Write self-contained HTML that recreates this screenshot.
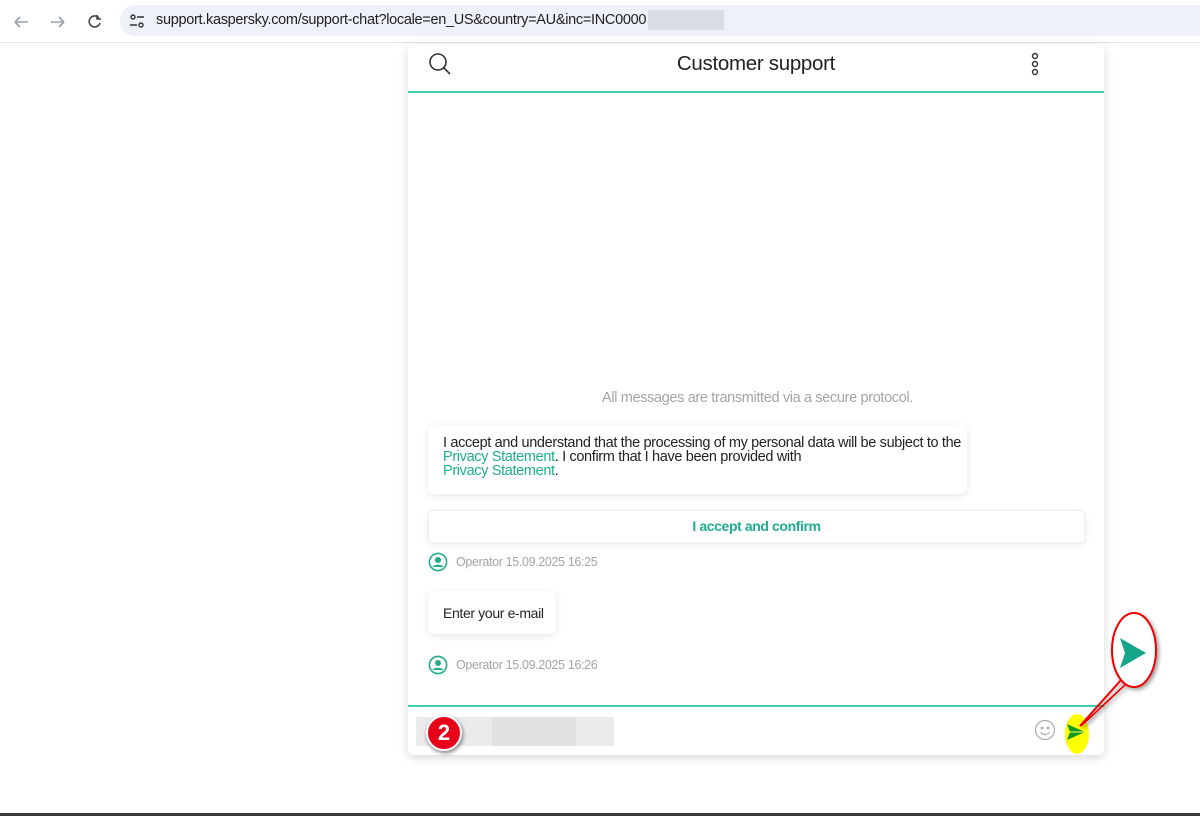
<!DOCTYPE html>
<html><head><meta charset="utf-8"><style>
*{margin:0;padding:0;box-sizing:border-box}
body{width:1200px;height:816px;background:#fff;position:relative;overflow:hidden;font-family:"Liberation Sans",sans-serif;}
.top{position:absolute;left:0;top:0;width:1200px;height:43px;background:#fff;border-bottom:1px solid #e3e3e3}
.url{position:absolute;left:120px;top:5px;width:1080px;height:31px;background:#eef1f8;border-radius:16px 0 0 16px}
.url span{position:absolute;left:36px;top:7px;font-size:14.5px;color:#1f1f1f;letter-spacing:-0.3px}
.blur{position:absolute;left:648px;top:10px;width:76px;height:20px;background:#d9dce3}
.panel{position:absolute;left:408px;top:44px;width:696px;height:711px;background:#fff;box-shadow:0 3px 10px rgba(0,0,0,.15);border-radius:0 0 6px 6px}
.t{position:absolute;font-size:14px;letter-spacing:-0.35px;color:#222}
.g{color:#1fae8d}
.grey{color:#a4a4a4}
</style></head><body>
<div class="top">
<svg style="position:absolute;left:12px;top:12px" width="100" height="20" viewBox="0 0 100 20" fill="none" stroke="#9aa0a6" stroke-width="1.6"><path d="M3 10h13M3 10l5-5M3 10l5 5"/><path d="M39 10h13M52 10l-5-5M52 10l-5 5" /><path d="M87 6a5.5 5.5 0 1 0 1 5" stroke="#444"/><path d="M85 3v4h4" stroke="#444"/></svg>
<div class="url"><svg style="position:absolute;left:8px;top:7px" width="18" height="18" viewBox="0 0 18 18" fill="none" stroke="#333" stroke-width="1.4"><circle cx="5" cy="5" r="2"/><path d="M9 5h7M2 13h7"/><circle cx="13" cy="13" r="2"/></svg><span>support.kaspersky.com/support-chat?locale=en_US&amp;country=AU&amp;inc=INC0000</span></div>
<div class="blur"></div>
</div>
<div class="panel">
<svg style="position:absolute;left:20px;top:8px" width="24" height="24" viewBox="0 0 24 24" fill="none" stroke="#333" stroke-width="1.6"><circle cx="10" cy="10" r="8"/><path d="M16 16l6 6"/></svg>
<div style="position:absolute;left:0;width:696px;top:8px;text-align:center;font-size:20.5px;color:#222;letter-spacing:-0.3px">Customer support</div>
<svg style="position:absolute;left:621px;top:8px" width="12" height="24" viewBox="0 0 12 24" fill="none" stroke="#333" stroke-width="1.4"><circle cx="6" cy="4" r="2.5"/><circle cx="6" cy="12" r="2.5"/><circle cx="6" cy="20" r="2.5"/></svg>
<div style="position:absolute;left:0;top:47px;width:696px;height:2px;background:#3fcfb0"></div>
<div class="t grey" style="left:194px;top:346px;font-size:14.5px">All messages are transmitted via a secure protocol.</div>
<div style="position:absolute;left:20px;top:381px;width:539px;height:69px;background:#fff;border-radius:6px;box-shadow:0 2px 8px rgba(0,0,0,.1)"></div>
<div class="t" style="left:35px;top:392px;line-height:14px;font-size:14.5px">I accept and understand that the processing of my personal data will be subject to the<br><span class="g">Privacy Statement</span>. I confirm that I have been provided with<br><span class="g">Privacy Statement</span>.</div>
<div style="position:absolute;left:20px;top:466px;width:657px;height:33px;background:#fff;border:1px solid #eee;border-radius:4px;box-shadow:0 2px 8px rgba(0,0,0,.08);text-align:center;line-height:31px;font-size:14px;font-weight:bold;color:#1fae8d;letter-spacing:-0.4px">I accept and confirm</div>
<svg style="position:absolute;left:20px;top:508px" width="20" height="20" viewBox="0 0 20 20"><circle cx="10" cy="10" r="8.6" fill="none" stroke="#1fae8d" stroke-width="1.6"/><circle cx="10" cy="8" r="3" fill="#1fae8d"/><path d="M4.5 15c1-3 10-3 11 0z" fill="#1fae8d"/></svg>
<div class="t grey" style="left:48px;top:511px;font-size:12.5px">Operator 15.09.2025 16:25</div>
<div style="position:absolute;left:20px;top:547px;width:128px;height:43px;background:#fff;border-radius:6px;box-shadow:0 2px 8px rgba(0,0,0,.1)"></div>
<div class="t" style="left:35px;top:561px">Enter your e-mail</div>
<svg style="position:absolute;left:20px;top:611px" width="20" height="20" viewBox="0 0 20 20"><circle cx="10" cy="10" r="8.6" fill="none" stroke="#1fae8d" stroke-width="1.6"/><circle cx="10" cy="8" r="3" fill="#1fae8d"/><path d="M4.5 15c1-3 10-3 11 0z" fill="#1fae8d"/></svg>
<div class="t grey" style="left:48px;top:614px;font-size:12.5px">Operator 15.09.2025 16:26</div>
<div style="position:absolute;left:0;top:661px;width:696px;height:2px;background:#3fcfb0"></div>
<div style="position:absolute;left:8px;top:673px;width:198px;height:29px;background:#ebebeb"></div>
<div style="position:absolute;left:84px;top:673px;width:84px;height:29px;background:#e2e2e2"></div>
<svg style="position:absolute;left:626px;top:675px" width="22" height="22" viewBox="0 0 22 22" fill="none" stroke="#aaa" stroke-width="1.2"><circle cx="11" cy="11" r="9.5"/><circle cx="8" cy="9" r=".8" fill="#aaa"/><circle cx="14" cy="9" r=".8" fill="#aaa"/><path d="M6.5 13c2 3.5 7 3.5 9 0"/></svg>
<div style="position:absolute;left:657px;top:670px;width:24px;height:40px;background:#ffff00;border-radius:50%"></div>
<svg style="position:absolute;left:657px;top:677px" width="22" height="22" viewBox="0 0 22 22"><path d="M2 3l18 8-18 8 3-8z" fill="#119a1f"/><path d="M5 11l15 0" stroke="#ffff66" stroke-width="1"/></svg>
</div>
<div style="position:absolute;left:426px;top:715px;width:36px;height:36px;border-radius:50%;background:#e8001a;border:2.5px solid #fff;box-shadow:1px 2px 4px rgba(0,0,0,.5);color:#fff;font-weight:bold;font-size:22px;text-align:center;line-height:31px">2</div>
<svg style="position:absolute;left:1060px;top:608px" width="140" height="140" viewBox="0 0 140 140">
<defs><filter id="s"><feDropShadow dx="2" dy="2" stdDeviation="2" flood-opacity=".4"/></filter></defs>
<g filter="url(#s)">
<ellipse cx="74" cy="42" rx="22" ry="37" fill="#fff" stroke="#e00" stroke-width="2"/>
<path d="M61 72L20 118" stroke="#e00" stroke-width="2"/><path d="M66 76L21 118" stroke="#e00" stroke-width="1.6"/></g>
<path d="M60 30l26 15-26 15 5-15z" fill="#14a58a"/>
</svg>
<div style="position:absolute;left:0;top:813px;width:1200px;height:3px;background:#3a3a3a"></div>
</body></html>
